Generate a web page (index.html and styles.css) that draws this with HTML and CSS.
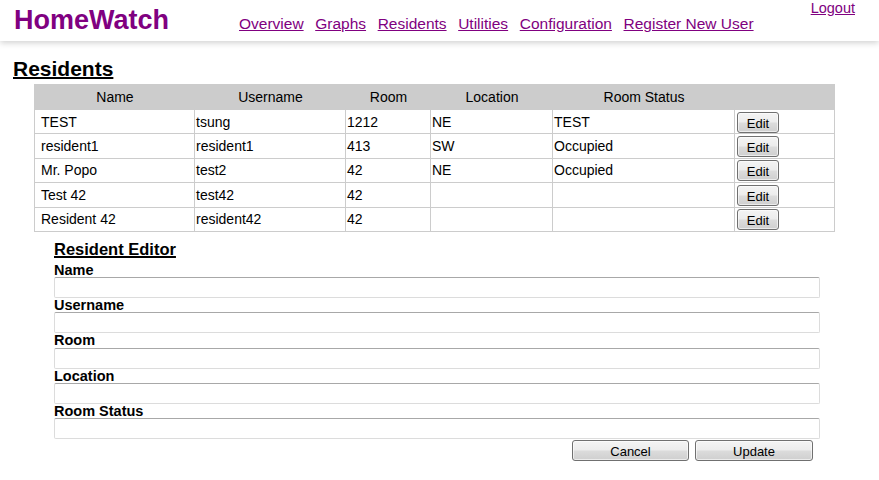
FILE: index.html
```html
<!DOCTYPE html>
<html lang="en">
<head>
<meta charset="utf-8">
<title>HomeWatch - Residents</title>
<link rel="stylesheet" href="styles.css">
</head>
<body>
<header class="topbar">
  <div class="brand">HomeWatch</div>
  <nav class="nav">
    <a href="#">Overview</a>
    <a href="#">Graphs</a>
    <a href="#">Residents</a>
    <a href="#">Utilities</a>
    <a href="#">Configuration</a>
    <a href="#">Register New User</a>
  </nav>
  <a class="logout" href="#">Logout</a>
</header>
<main class="content">
  <h2 class="page-title">Residents</h2>
  <table class="residents">
    <colgroup>
      <col class="c-name"><col class="c-user"><col class="c-room"><col class="c-loc"><col class="c-status"><col class="c-act">
    </colgroup>
    <thead>
      <tr><th>Name</th><th>Username</th><th>Room</th><th>Location</th><th>Room Status</th><th></th></tr>
    </thead>
    <tbody>
      <tr><td class="first">TEST</td><td>tsung</td><td>1212</td><td>NE</td><td>TEST</td><td><button class="btn btn-edit">Edit</button></td></tr>
      <tr><td class="first">resident1</td><td>resident1</td><td>413</td><td>SW</td><td>Occupied</td><td><button class="btn btn-edit">Edit</button></td></tr>
      <tr><td class="first">Mr. Popo</td><td>test2</td><td>42</td><td>NE</td><td>Occupied</td><td><button class="btn btn-edit">Edit</button></td></tr>
      <tr><td class="first">Test 42</td><td>test42</td><td>42</td><td></td><td></td><td><button class="btn btn-edit">Edit</button></td></tr>
      <tr><td class="first">Resident 42</td><td>resident42</td><td>42</td><td></td><td></td><td><button class="btn btn-edit">Edit</button></td></tr>
    </tbody>
  </table>
  <section class="editor">
    <h3 class="editor-title">Resident Editor</h3>
    <label class="field-label" for="f-name">Name</label>
    <input class="field-input" id="f-name" type="text">
    <label class="field-label" for="f-user">Username</label>
    <input class="field-input" id="f-user" type="text">
    <label class="field-label" for="f-room">Room</label>
    <input class="field-input" id="f-room" type="text">
    <label class="field-label" for="f-loc">Location</label>
    <input class="field-input" id="f-loc" type="text">
    <label class="field-label" for="f-status">Room Status</label>
    <input class="field-input" id="f-status" type="text">
    <div class="actions">
      <button class="btn btn-cancel">Cancel</button>
      <button class="btn btn-update">Update</button>
    </div>
  </section>
</main>
</body>
</html>
```
FILE: styles.css
```css
html, body {
  margin: 0;
  padding: 0;
  background: #ffffff;
}
body {
  font-family: "Liberation Sans", Arial, sans-serif;
  color: #000;
}

/* Header */
.topbar {
  display: flex;
  align-items: baseline;
  height: 41px;
  background: #fff;
  box-shadow: 0 2px 6px rgba(0, 0, 0, 0.18);
  position: relative;
  z-index: 1;
}
.brand {
  margin: 7px 0 0 14px;
  width: 225px;
  font-size: 27px;
  line-height: 27px;
  font-weight: bold;
  color: #800080;
}
.nav {
  display: flex;
  align-items: baseline;
  gap: 11.6px;
}
.nav a, .logout {
  color: #800080;
  text-decoration: underline;
}
.nav a {
  font-size: 15.5px;
  line-height: 18px;
}
.logout {
  align-self: flex-start;
  margin: 0.5px 24px 0 auto;
  font-size: 14.5px;
  line-height: 15px;
}

/* Content */
.content {
  padding: 0;
}
.page-title {
  margin: 16px 0 3px 13px;
  font-size: 21px;
  line-height: 24px;
  font-weight: bold;
  text-decoration: underline;
  text-decoration-thickness: 2px;
}

.residents {
  margin-left: 34px;
  width: 800px;
  border-collapse: collapse;
  table-layout: fixed;
  font-size: 14px;
}
.c-name { width: 160px; }
.c-user { width: 151px; }
.c-room { width: 85px; }
.c-loc { width: 122px; }
.c-status { width: 182px; }
.c-act { width: 100px; }

.residents th,
.residents td {
  border: 1px solid #cccccc;
  padding: 0 0 0 1px;
  text-align: left;
  white-space: nowrap;
}
.residents thead th {
  background: #cccccc;
  font-weight: normal;
  text-align: center;
  height: 24px;
}
.residents tbody td {
  height: 23.4px;
}
.residents td.first {
  padding-left: 6px;
}

/* Buttons */
.btn {
  font-family: "Liberation Sans", Arial, sans-serif;
  font-size: 13px;
  color: #000;
  border: 1px solid #707070;
  border-radius: 3px;
  background: linear-gradient(to bottom, #f4f4f4 0%, #ececec 48%, #dcdcdc 52%, #cfcfcf 100%);
  padding: 1px 0 0 0;
  box-sizing: border-box;
  height: 21px;
  line-height: 19px;
  box-shadow: inset 0 0 0 1px rgba(255, 255, 255, 0.6);
}
.btn-edit {
  width: 42px;
  margin: 1px 0 0 1px;
  display: block;
}
.btn-cancel { width: 117px; }
.btn-update { width: 118px; }

/* Editor */
.editor {
  margin: 8px 0 0 54px;
  width: 766px;
  display: flex;
  flex-direction: column;
}
.editor-title {
  margin: -1px 0 4px 0;
  font-size: 16.5px;
  line-height: 20px;
  font-weight: bold;
  text-decoration: underline;
  text-decoration-thickness: 2px;
}
.field-label {
  font-size: 14.5px;
  line-height: 14.25px;
  font-weight: bold;
}
.field-input {
  box-sizing: border-box;
  width: 766px;
  height: 21px;
  margin: 0;
  padding: 1px 3px;
  border: 1px solid #dcdcdc;
  border-top-color: #a8a8a8;
  border-radius: 2px;
  font-family: "Liberation Sans", Arial, sans-serif;
  font-size: 13px;
  background: #fff;
}
.actions {
  display: flex;
  justify-content: flex-end;
  gap: 6px;
  margin: 1px 7px 0 0;
}
```
